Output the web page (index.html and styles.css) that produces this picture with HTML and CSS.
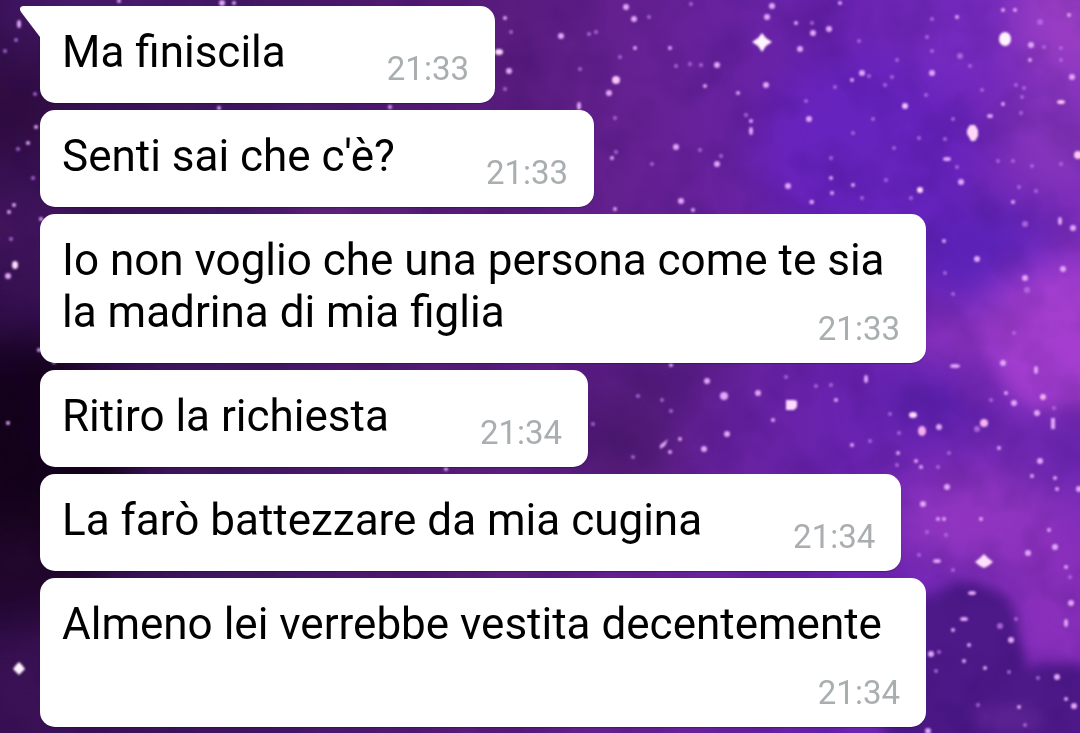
FILE: index.html
```html
<!DOCTYPE html>
<html lang="it">
<head>
<meta charset="utf-8">
<meta name="viewport" content="width=device-width, initial-scale=1">
<title>Chat</title>
<link rel="stylesheet" href="styles.css">
</head>
<body>
<svg class="wallpaper" viewBox="0 0 1080 733" preserveAspectRatio="xMidYMid slice" aria-hidden="true">
  <defs>
    <linearGradient id="sky" x1="0" y1="0" x2="1" y2="0">
      <stop offset="0" stop-color="#361050"/>
      <stop offset=".2" stop-color="#40165f"/>
      <stop offset=".45" stop-color="#591c7c"/>
      <stop offset=".6" stop-color="#662194"/>
      <stop offset=".78" stop-color="#6a23b0"/>
      <stop offset="1" stop-color="#7b2cba"/>
    </linearGradient>
    <filter id="soft" x="-20%" y="-20%" width="140%" height="140%" color-interpolation-filters="sRGB"><feGaussianBlur stdDeviation="22"/></filter>
    <filter id="cloud" x="-30%" y="-30%" width="160%" height="160%" color-interpolation-filters="sRGB"><feGaussianBlur stdDeviation="6"/></filter>
    <filter id="glow" x="-5%" y="-5%" width="110%" height="110%" color-interpolation-filters="sRGB"><feGaussianBlur stdDeviation="1"/></filter>
    <filter id="bright" x="-5%" y="-5%" width="110%" height="110%" color-interpolation-filters="sRGB"><feGaussianBlur stdDeviation=".9"/></filter>
    <filter id="mist" x="0" y="0" width="100%" height="100%" color-interpolation-filters="sRGB">
      <feTurbulence type="fractalNoise" baseFrequency=".02" numOctaves="3" seed="7"/>
      <feColorMatrix values="0 0 0 0 .12  0 0 0 0 .02  0 0 0 0 .3  1.8 0 0 0 -.75"/>
    </filter>
  </defs>
  <rect width="1080" height="733" fill="url(#sky)"/>
  <g filter="url(#soft)">
    <ellipse cx="0" cy="110" rx="70" ry="36" fill="#300d3e"/>
    <ellipse cx="20" cy="225" rx="70" ry="30" fill="#45165f"/>
    <ellipse cx="20" cy="475" rx="110" ry="140" fill="#14021a"/>
    <ellipse cx="0" cy="575" rx="100" ry="50" fill="#22072c"/>
    <ellipse cx="10" cy="710" rx="90" ry="40" fill="#3b1155"/>
    <ellipse cx="110" cy="0" rx="130" ry="16" fill="#55207f"/>
    <ellipse cx="340" cy="210" rx="80" ry="14" fill="#702b8b"/>
    <ellipse cx="870" cy="150" rx="110" ry="100" fill="#6723bd"/>
    <ellipse cx="960" cy="30" rx="60" ry="60" fill="#762bc0"/>
    <ellipse cx="1080" cy="20" rx="70" ry="60" fill="#983dc3"/>
    <ellipse cx="1060" cy="140" rx="50" ry="50" fill="#8636bc"/>
    <ellipse cx="985" cy="255" rx="70" ry="50" fill="#5a22b7"/>
    <ellipse cx="620" cy="440" rx="60" ry="60" fill="#4f1a73"/>
    <ellipse cx="680" cy="370" rx="60" ry="20" fill="#501b79"/>
    <ellipse cx="930" cy="400" rx="60" ry="36" fill="#5b20ab"/>
    <ellipse cx="1060" cy="330" rx="80" ry="70" fill="#a840d2"/>
    <ellipse cx="950" cy="340" rx="40" ry="28" fill="#8f34c0"/>
    <ellipse cx="1055" cy="455" rx="60" ry="32" fill="#6825ae"/>
    <ellipse cx="980" cy="520" rx="90" ry="50" fill="#9035c0"/>
    <ellipse cx="1060" cy="600" rx="60" ry="80" fill="#892fbb"/>
  </g>
  <g filter="url(#cloud)">
    <path d="M900 600 L938 594 Q960 572 986 588 Q1010 592 1016 616 L1026 668 Q1052 656 1100 672 V760 H880Z" fill="#4d1988"/>
    <ellipse cx="1010" cy="718" rx="38" ry="14" fill="#602596" opacity=".7"/>
    <path d="M1000 360 Q1020 320 1050 330 L1100 300 V400 L1040 410 Q1010 400 1000 360Z" fill="#a43dce" opacity=".6"/>
    <path d="M975 350 q25 20 20 50 q-20 20 -42 -10Z" fill="#7026ae" opacity=".6"/>
  </g>
  <rect width="1080" height="733" filter="url(#mist)" opacity=".2"/>
  <g fill="#b870e4" opacity=".85" filter="url(#glow)">
    <circle cx="16" cy="40" r="2"/><circle cx="5" cy="51" r="2"/><circle cx="35" cy="94" r="2"/><circle cx="18" cy="149" r="2"/><circle cx="33" cy="178" r="2"/><circle cx="11" cy="239" r="2"/>
    <circle cx="511" cy="32" r="2"/><circle cx="505" cy="89" r="2"/><circle cx="589" cy="34" r="2"/><circle cx="596" cy="32" r="2"/><circle cx="580" cy="69" r="2"/><circle cx="620" cy="57" r="2"/><circle cx="649" cy="17" r="2"/><circle cx="691" cy="4" r="2"/><circle cx="676" cy="66" r="2"/><circle cx="690" cy="64" r="2"/><circle cx="701" cy="65" r="2"/><circle cx="615" cy="118" r="2"/><circle cx="616" cy="152" r="2"/><circle cx="652" cy="164" r="2"/><circle cx="700" cy="150" r="2"/><circle cx="721" cy="156" r="2"/><circle cx="746" cy="115" r="2"/>
    <circle cx="812" cy="23" r="2"/><circle cx="859" cy="41" r="2"/><circle cx="932" cy="19" r="2"/><circle cx="927" cy="37" r="2"/><circle cx="932" cy="51" r="2"/><circle cx="960" cy="56" r="3"/><circle cx="970" cy="66" r="2"/><circle cx="897" cy="60" r="2"/><circle cx="835" cy="87" r="2"/><circle cx="869" cy="76" r="2"/><circle cx="885" cy="85" r="2"/><circle cx="892" cy="77" r="2"/><circle cx="926" cy="95" r="2"/><circle cx="982" cy="90" r="2"/><circle cx="1016" cy="85" r="2"/><circle cx="1024" cy="88" r="2"/><circle cx="1022" cy="97" r="2"/><circle cx="1021" cy="113" r="2"/><circle cx="806" cy="101" r="2"/><circle cx="873" cy="119" r="2"/><circle cx="853" cy="133" r="2"/><circle cx="919" cy="138" r="2"/><circle cx="945" cy="139" r="2"/><circle cx="953" cy="119" r="2"/><circle cx="894" cy="148" r="2"/><circle cx="831" cy="158" r="2"/><circle cx="957" cy="167" r="2"/><circle cx="998" cy="161" r="2"/><circle cx="1013" cy="161" r="2"/><circle cx="1032" cy="166" r="2"/><circle cx="1061" cy="164" r="2"/><circle cx="1019" cy="187" r="2"/><circle cx="1036" cy="191" r="2"/><circle cx="811" cy="202" r="2"/><circle cx="886" cy="180" r="2"/><circle cx="911" cy="198" r="2"/><circle cx="862" cy="198" r="2"/><circle cx="1040" cy="22" r="3"/><circle cx="1061" cy="48" r="2"/><circle cx="1061" cy="60" r="2"/><circle cx="1044" cy="47" r="2"/>
    <circle cx="638" cy="396" r="2"/><circle cx="662" cy="400" r="2"/><circle cx="671" cy="411" r="2"/><circle cx="593" cy="424" r="2"/><circle cx="633" cy="457" r="2"/><circle cx="816" cy="386" r="2"/><circle cx="831" cy="385" r="2"/><circle cx="786" cy="377" r="2"/><circle cx="890" cy="414" r="2"/><circle cx="870" cy="441" r="2"/><circle cx="899" cy="433" r="2"/><circle cx="949" cy="453" r="2"/><circle cx="938" cy="467" r="2"/><circle cx="897" cy="465" r="2"/><circle cx="977" cy="429" r="3"/><circle cx="1054" cy="408" r="2"/><circle cx="991" cy="400" r="2"/><circle cx="945" cy="273" r="2"/><circle cx="953" cy="294" r="2"/><circle cx="1027" cy="290" r="3"/><circle cx="1025" cy="224" r="3"/><circle cx="1014" cy="333" r="2"/><circle cx="946" cy="535" r="2"/><circle cx="927" cy="532" r="2"/><circle cx="953" cy="570" r="2"/><circle cx="919" cy="555" r="2"/><circle cx="1016" cy="619" r="2"/><circle cx="1000" cy="626" r="3"/><circle cx="939" cy="652" r="2"/><circle cx="1009" cy="672" r="2"/><circle cx="1038" cy="678" r="2"/><circle cx="936" cy="671" r="2"/><circle cx="978" cy="705" r="2"/><circle cx="1025" cy="725" r="2"/><circle cx="1070" cy="577" r="2"/>
  </g>
  <g fill="#e2a6f9" filter="url(#glow)">
    <ellipse cx="19" cy="24" rx="2" ry="4"/><circle cx="119" cy="1" r="2"/><circle cx="222" cy="3" r="3"/><circle cx="234" cy="3" r="2"/><circle cx="36" cy="127" r="2"/><circle cx="28" cy="143" r="2"/><circle cx="14" cy="205" r="2"/><circle cx="9" cy="212" r="2"/><circle cx="41" cy="219" r="2"/><circle cx="219" cy="108" r="2"/><circle cx="390" cy="107" r="2"/><circle cx="8" cy="276" r="3"/><ellipse cx="15" cy="265" rx="3" ry="4" fill="#fbdfff"/><circle cx="54" cy="362" r="2"/><circle cx="39" cy="350" r="2"/><circle cx="8" cy="423" r="2"/>
    <circle cx="446" cy="469" r="2"/><circle cx="505" cy="18" r="2"/><ellipse cx="499" cy="52" rx="4" ry="3" fill="#f9d6ff"/><circle cx="509" cy="71" r="3"/><circle cx="561" cy="36" r="3"/><circle cx="626" cy="7" r="3"/><circle cx="634" cy="19" r="3"/><circle cx="635" cy="48" r="2"/><circle cx="616" cy="80" r="4" fill="#f7c5fb"/><circle cx="609" cy="93" r="3"/><ellipse cx="579" cy="106" rx="2" ry="4"/><circle cx="670" cy="48" r="2"/><circle cx="717" cy="65" r="3"/><circle cx="705" cy="86" r="2"/><circle cx="738" cy="93" r="2"/><circle cx="766" cy="85" r="3"/><circle cx="751" cy="121" r="2"/><ellipse cx="751" cy="131" rx="2" ry="4"/><circle cx="676" cy="147" r="3"/><circle cx="612" cy="158" r="2"/><circle cx="717" cy="164" r="3"/><circle cx="681" cy="201" r="3"/><circle cx="693" cy="210" r="2"/><circle cx="615" cy="209" r="2"/><circle cx="772" cy="6" r="3"/><circle cx="767" cy="17" r="3"/>
    <circle cx="796" cy="23" r="2"/><circle cx="813" cy="33" r="3"/><circle cx="829" cy="29" r="3"/><circle cx="800" cy="49" r="3"/><circle cx="840" cy="3" r="2"/><circle cx="957" cy="17" r="2"/><circle cx="1003" cy="10" r="2"/><circle cx="1015" cy="10" r="2"/><circle cx="1069" cy="15" r="2"/><circle cx="1031" cy="45" r="3"/><circle cx="1030" cy="60" r="2"/><circle cx="1072" cy="77" r="3"/><ellipse cx="1061" cy="102" rx="4" ry="2" fill="#ffc7ef"/><circle cx="862" cy="73" r="3"/><circle cx="852" cy="80" r="2"/><circle cx="932" cy="73" r="3"/><circle cx="905" cy="106" r="3" fill="#f4c1ff"/><circle cx="809" cy="119" r="3"/><circle cx="1003" cy="104" r="2"/><ellipse cx="990" cy="116" rx="3" ry="2"/><circle cx="1078" cy="155" r="4" fill="#ffc7ef"/><ellipse cx="947" cy="159" rx="4" ry="2"/><circle cx="961" cy="182" r="3"/><circle cx="788" cy="186" r="3"/><circle cx="831" cy="178" r="2"/><circle cx="853" cy="185" r="2"/><circle cx="832" cy="193" r="2"/><circle cx="812" cy="202" r="2"/><circle cx="920" cy="190" r="3" fill="#ffd8f8"/><circle cx="1013" cy="202" r="2"/>
    <ellipse cx="1060" cy="221" rx="2" ry="4"/><circle cx="1073" cy="228" r="3"/><circle cx="944" cy="241" r="2"/><circle cx="977" cy="259" r="3"/><circle cx="1025" cy="278" r="3"/><circle cx="1063" cy="269" r="3"/><circle cx="1003" cy="363" r="3"/><ellipse cx="1036" cy="370" rx="2" ry="4"/><ellipse cx="955" cy="366" rx="5" ry="2"/><ellipse cx="866" cy="379" rx="2" ry="4"/><circle cx="671" cy="365" r="2"/><circle cx="707" cy="381" r="3"/><circle cx="724" cy="396" r="4"/><circle cx="758" cy="393" r="3"/><circle cx="727" cy="434" r="3"/><circle cx="704" cy="449" r="3"/><circle cx="680" cy="439" r="2"/><circle cx="670" cy="452" r="2"/><path d="M660 445l8-6-3 7-5 3z"/><circle cx="773" cy="420" r="2"/><circle cx="836" cy="400" r="2"/>
    <ellipse cx="913" cy="415" rx="4" ry="3" fill="#ffdcff"/><ellipse cx="922" cy="431" rx="4" ry="5" fill="#f6adf0"/><circle cx="939" cy="427" r="3"/><circle cx="984" cy="423" r="4" fill="#f9b2ee"/><circle cx="1006" cy="393" r="2"/><circle cx="1014" cy="403" r="3"/><circle cx="1043" cy="397" r="3" fill="#f5adf0"/><circle cx="1037" cy="413" r="3"/><rect x="1051" y="418" width="4" height="11"/><circle cx="999" cy="448" r="2"/><circle cx="1040" cy="461" r="3"/><circle cx="1032" cy="476" r="2"/><circle cx="1055" cy="478" r="2"/><circle cx="1057" cy="489" r="2"/><circle cx="1079" cy="489" r="3"/><circle cx="852" cy="445" r="2"/><circle cx="898" cy="453" r="2"/><circle cx="916" cy="461" r="2"/><circle cx="921" cy="467" r="2"/><circle cx="947" cy="487" r="3"/><circle cx="923" cy="504" r="3"/><circle cx="938" cy="519" r="2"/><circle cx="944" cy="519" r="2"/><circle cx="981" cy="519" r="2"/><circle cx="1049" cy="530" r="2"/><circle cx="1055" cy="547" r="3"/><ellipse cx="937" cy="561" rx="4" ry="2"/><circle cx="1028" cy="553" r="3"/><circle cx="1066" cy="567" r="2"/><circle cx="1071" cy="603" r="3"/><ellipse cx="1066" cy="623" rx="2" ry="4"/><ellipse cx="972" cy="593" rx="4" ry="2"/><ellipse cx="964" cy="619" rx="4" ry="2"/><circle cx="953" cy="630" r="2"/><circle cx="1011" cy="640" r="3"/><circle cx="969" cy="645" r="2"/><circle cx="931" cy="654" r="3"/><circle cx="964" cy="661" r="2"/><circle cx="985" cy="668" r="2"/><circle cx="1057" cy="677" r="3"/><circle cx="1066" cy="699" r="2"/><circle cx="1074" cy="706" r="3"/><circle cx="1019" cy="707" r="2"/><circle cx="928" cy="731" r="3"/>
  </g>
  <g fill="#fff4fd" filter="url(#bright)">
    <path d="M762 33l4 5 6 4-6 4-4 6-4-6-6-4 6-4z"/>
    <ellipse cx="1005" cy="39" rx="6" ry="7"/>
    <path d="M967 130l3-5h5l3 5v6l-3 5h-4l-2-4-2-3z" fill="#fed7f8"/>
    <path d="M786 400h8l3 1v6l-3 3h-8z" fill="#ffdaff"/>
    <path d="M984 554l4 4 5 4-5 4-4 2-4-2-5-4 5-4z" fill="#ffe0fb"/>
    <path d="M19 662l3 3 3 4-3 3-3 3-3-3-3-3 3-4z"/>
  </g>
</svg>

<main class="chat">
  <p class="bubble bubble--tail">
    <svg class="tail" viewBox="0 0 21 31" aria-hidden="true"><path d="M21 0H3Q-2 1 1 6L20 31H21Z" fill="#fff"/></svg>
    Ma finiscila<time class="time">21:33</time></p>
  <p class="bubble">Senti sai che c'è?<time class="time">21:33</time></p>
  <p class="bubble">Io non voglio che una persona come te sia la madrina di mia figlia<time class="time">21:33</time></p>
  <p class="bubble">Ritiro la richiesta<time class="time">21:34</time></p>
  <p class="bubble">La farò battezzare da mia cugina<time class="time">21:34</time></p>
  <p class="bubble">Almeno lei verrebbe vestita decentemente<time class="time">21:34</time></p>
</main>
</body>
</html>
```
FILE: styles.css
```css
* {
  box-sizing: border-box;
}

body {
  margin: 0;
  background: #40165f;
  color: #000;
  font-family: Roboto, "Liberation Sans", sans-serif;
}

.wallpaper {
  position: fixed;
  inset: 0;
  z-index: -1;
  width: 100%;
  height: 100%;
}

.chat {
  display: flex;
  flex-direction: column;
  align-items: flex-start;
  gap: 7px;
  padding: 6px 40px;
}

.bubble {
  position: relative;
  display: flow-root;
  max-width: min(100%, 886px);
  margin: 0;
  padding: 20px 26px 15px 22px;
  border-radius: 15px;
  background: #fff;
  box-shadow: 0 1px 1px rgba(30, 5, 50, 0.35);
  font-size: 44px;
  line-height: 52px;
}

.bubble--tail {
  min-width: 455px;
  border-top-left-radius: 0;
}

.tail {
  position: absolute;
  top: 0;
  right: 100%;
  width: 21px;
  height: 31px;
  margin-right: -1px;
}

/* Sits on the last line when there is room, otherwise drops below it. */
.time {
  float: right;
  margin: 24px 0 0 91px;
  color: #a9aeb0;
  font-size: 33px;
  line-height: 38px;
}
```
